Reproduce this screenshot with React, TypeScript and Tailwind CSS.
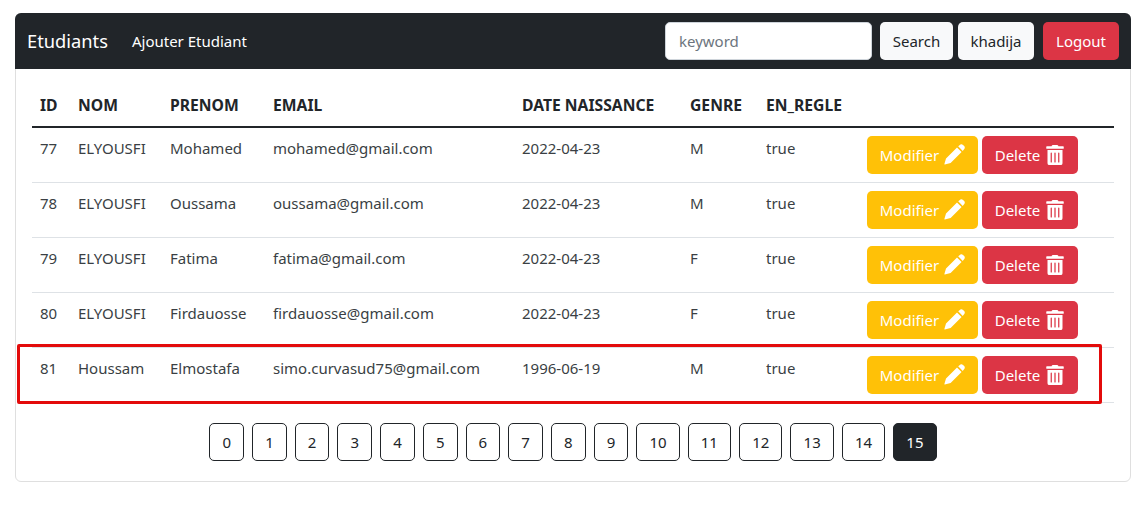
import { FaTrashAlt } from "react-icons/fa";

const rows = [
  ["77", "ELYOUSFI", "Mohamed", "mohamed@gmail.com", "2022-04-23", "M", "true"],
  ["78", "ELYOUSFI", "Oussama", "oussama@gmail.com", "2022-04-23", "M", "true"],
  ["79", "ELYOUSFI", "Fatima", "fatima@gmail.com", "2022-04-23", "F", "true"],
  ["80", "ELYOUSFI", "Firdauosse", "firdauosse@gmail.com", "2022-04-23", "F", "true"],
  ["81", "Houssam", "Elmostafa", "simo.curvasud75@gmail.com", "1996-06-19", "M", "true"],
];
const heads = ["ID", "NOM", "PRENOM", "EMAIL", "DATE NAISSANCE", "GENRE", "EN_REGLE", ""];
const pages = Array.from({ length: 16 }, (_, i) => i);

function Pencil() {
  return (
    <svg width="21" height="21" viewBox="0 0 21 21" fill="currentColor">
      <path d="M14.2 2.2 16.2.7c.9-.7 2-.6 2.8.2l1.2 1.2c.8.8.8 2 .1 2.8l-1.6 2z" />
      <path d="M13 3.4 17.6 8 6.6 19 .8 20.6c-.3.1-.5-.2-.4-.5L2 14.4z" />
    </svg>
  );
}

export default function App() {
  return (
    <div className="h-[505px] bg-white pt-[13px] px-[15px] text-[#212529] text-[15px] leading-[22px] font-['Noto_Sans','Open_Sans',sans-serif] relative">
      <div className="w-[1116px] h-[469px] border border-[#dfdfdf] rounded-[6px]">
        <nav className="-m-px h-[56px] bg-[#212529] rounded-t-[6px] flex items-center pl-[12px] pr-[12px] text-white">
          <span className="text-[18.3px] mr-[24px]">Etudiants</span>
          <span className="text-[15px]">Ajouter Etudiant</span>
          <div className="ml-auto flex items-center">
            <input
              placeholder="keyword"
              className="w-[207px] h-[38px] bg-white rounded-[5px] border border-[#ced4da] px-[13px] text-[15px] placeholder:text-[#6c757d] outline-none"
            />
            <button className="ml-[8px] w-[73px] h-[38px] rounded-[5px] bg-[#f8f9fa] text-[#212529]">Search</button>
            <button className="ml-[5px] w-[76px] h-[38px] rounded-[5px] bg-[#f8f9fa] text-[#212529]">khadija</button>
            <button className="ml-[9px] w-[76px] h-[38px] rounded-[5px] bg-[#dc3545] text-white">Logout</button>
          </div>
        </nav>
        <div className="pt-[16px] px-[16px]">
          <table className="w-[1082px] table-fixed border-collapse">
            <colgroup>
              <col className="w-[38px]" />
              <col className="w-[92px]" />
              <col className="w-[103px]" />
              <col className="w-[249px]" />
              <col className="w-[168px]" />
              <col className="w-[76px]" />
              <col className="w-[101px]" />
              <col className="w-[255px]" />
            </colgroup>
            <thead>
              <tr className="h-[43px] border-b-2 border-[#212529]">
                {heads.map((h, i) => (
                  <th key={i} className="px-[8px] text-left font-bold whitespace-nowrap text-[15.7px]">{h}</th>
                ))}
              </tr>
            </thead>
            <tbody>
              {rows.map((r) => (
                <tr key={r[0]} className="h-[55px] border-b border-[#dee2e6]">
                  {r.map((c, i) => (
                    <td key={i} className="px-[8px] pt-[9px] pb-[22px] align-top whitespace-nowrap text-[#3a3f44] text-[15px]">{c}</td>
                  ))}
                  <td className="px-[8px] py-0 align-middle">
                    <div className="flex gap-[4px]">
                      <button className="w-[111px] h-[38px] rounded-[5px] bg-[#ffc107] text-white flex items-center justify-center gap-[5px]">
                        Modifier <Pencil />
                      </button>
                      <button className="w-[96px] h-[38px] rounded-[5px] bg-[#dc3545] text-white flex items-center justify-center gap-[5px]">
                        Delete <FaTrashAlt size={20} />
                      </button>
                    </div>
                  </td>
                </tr>
              ))}
            </tbody>
          </table>
          <div className="mt-[20px] flex justify-center gap-[8px]">
            {pages.map((p) => (
              <button
                key={p}
                className={
                  p === 15
                    ? "h-[38px] w-[43.4px] rounded-[5px] bg-[#212529] border border-[#212529] text-white"
                    : p >= 10
                    ? "h-[38px] w-[43.4px] rounded-[5px] border border-[#212529] text-[#212529]"
                    : "h-[38px] w-[34.7px] rounded-[5px] border border-[#212529] text-[#212529]"
                }
              >
                {p}
              </button>
            ))}
          </div>
        </div>
      </div>
      <div className="absolute left-[17px] top-[344px] w-[1085px] h-[60px] border-[3px] border-[#e30b0b] rounded-[2px] pointer-events-none" />
    </div>
  );
}
